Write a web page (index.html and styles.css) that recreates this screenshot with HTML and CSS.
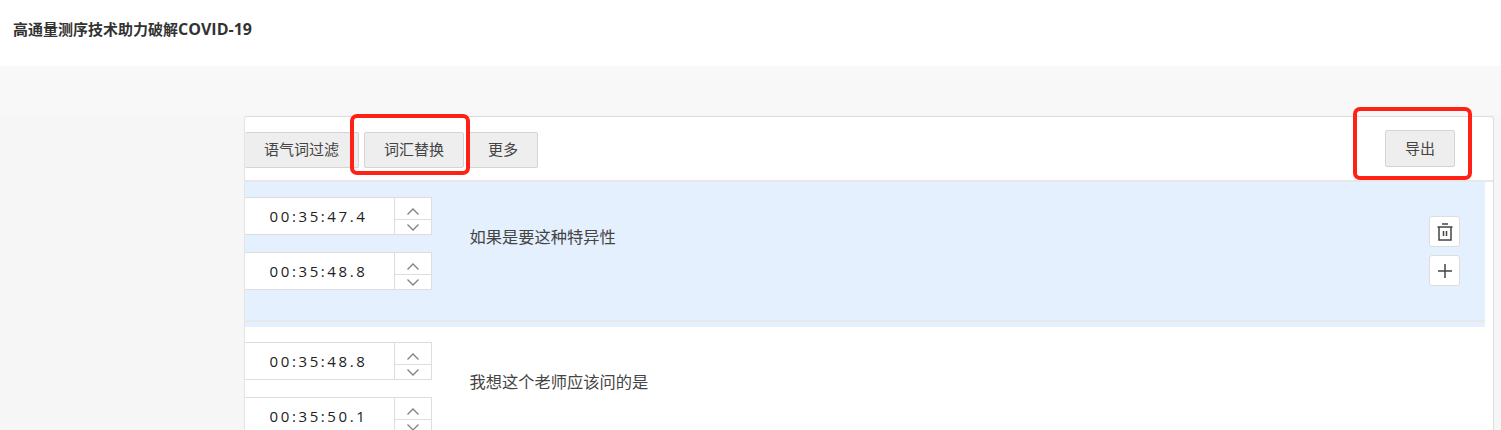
FILE: index.html
```html
<!DOCTYPE html>
<html lang="zh-CN">
  <head>
    <meta charset="UTF-8" />
    <title>高通量测序技术助力破解COVID-19</title>
    <link rel="stylesheet" href="styles.css">
  </head>
  <body>
    <header class="page-header">
      <h1>高通量测序技术助力破解<span class="title-latin">COVID-19</span></h1>
    </header>
    <main class="page-main">
      <section class="panel">
        <div class="toolbar">
          <div class="tool-group">
            <button class="tool-btn">语气词过滤</button>
            <button class="tool-btn">词汇替换</button>
            <button class="tool-btn">更多</button>
          </div>
          <button class="tool-btn export-btn">导出</button>
        </div>
        <div class="rows">
          <div class="row row-active">
            <div class="times">
              <div class="time-box">
                <span class="time-value">00:35:47.4</span>
                <span class="spinner">
                  <span class="spin spin-up"><svg width="12" height="7" viewBox="0 0 12 7"><path d="M.5 6.5L6 1l5.5 5.5" /></svg></span>
                  <span class="spin spin-down"><svg width="12" height="7" viewBox="0 0 12 7"><path d="M.5.5L6 6 11.5.5" /></svg></span>
                </span>
              </div>
              <div class="time-box">
                <span class="time-value">00:35:48.8</span>
                <span class="spinner">
                  <span class="spin spin-up"><svg width="12" height="7" viewBox="0 0 12 7"><path d="M.5 6.5L6 1l5.5 5.5" /></svg></span>
                  <span class="spin spin-down"><svg width="12" height="7" viewBox="0 0 12 7"><path d="M.5.5L6 6 11.5.5" /></svg></span>
                </span>
              </div>
            </div>
            <p class="row-text">如果是要这种特异性</p>
            <div class="row-actions">
              <button class="icon-btn">
                <svg width="16" height="18" viewBox="0 0 16 18"><path d="M.5 4h15M5 1h6M2 4v13h12V4M6.5 8v5M9.5 8v5" /></svg>
              </button>
              <button class="icon-btn">
                <svg width="16" height="16" viewBox="0 0 16 16"><path d="M8 1v14M1 8h14" /></svg>
              </button>
            </div>
          </div>
          <div class="row">
            <div class="times">
              <div class="time-box">
                <span class="time-value">00:35:48.8</span>
                <span class="spinner">
                  <span class="spin spin-up"><svg width="12" height="7" viewBox="0 0 12 7"><path d="M.5 6.5L6 1l5.5 5.5" /></svg></span>
                  <span class="spin spin-down"><svg width="12" height="7" viewBox="0 0 12 7"><path d="M.5.5L6 6 11.5.5" /></svg></span>
                </span>
              </div>
              <div class="time-box">
                <span class="time-value">00:35:50.1</span>
                <span class="spinner">
                  <span class="spin spin-up"><svg width="12" height="7" viewBox="0 0 12 7"><path d="M.5 6.5L6 1l5.5 5.5" /></svg></span>
                  <span class="spin spin-down"><svg width="12" height="7" viewBox="0 0 12 7"><path d="M.5.5L6 6 11.5.5" /></svg></span>
                </span>
              </div>
            </div>
            <p class="row-text">我想这个老师应该问的是</p>
          </div>
        </div>
      </section>
    </main>
    <!-- red marks drawn over the screenshot -->
    <div class="mark mark-replace"></div>
    <div class="mark mark-export"></div>
  </body>
</html>
```

FILE: styles.css
```css
* {
  box-sizing: border-box;
  margin: 0;
  padding: 0;
}

html,
body {
  height: 430px;
  overflow: hidden;
  background: #f6f6f6;
  color: #333;
  font-family: "Open Sans", "Noto Sans CJK SC", sans-serif;
}

body {
  position: relative;
}

/* Header */
.page-header {
  height: 66px;
  background: #fff;
  padding: 19px 13px 0;
}

.page-header h1 {
  font-size: 15px;
  line-height: 20px;
  font-weight: 700;
}

.title-latin {
  font-size: 16px;
}

/* Panel */
.page-main {
  padding: 50px 7px 0 244px;
  background: linear-gradient(#f8f8f8 49px, #f6f6f6 49px);
}

.panel {
  height: 314px;
  background: #fff;
  border: 1px solid #ddd;
  border-bottom: none;
  border-left-color: #e4e4e4;
  border-radius: 3px 3px 0 0;
}

.toolbar {
  display: flex;
  justify-content: space-between;
  height: 65px;
  padding: 13px 38px 0 0;
  border-bottom: 2px solid #e8e8e8;
}

.tool-group {
  display: flex;
  gap: 5px;
  padding-top: 2px;
}

.tool-btn {
  height: 36px;
  padding: 0 19px 3px;
  background: #eee;
  border: 1px solid #d4d4d4;
  border-radius: 2px;
  color: #444;
  font-family: inherit;
  font-size: 15px;
  white-space: nowrap;
}

.tool-group .tool-btn:first-child {
  border-left: none;
}

.tool-group .tool-btn:last-child {
  margin-left: -1px;
}

.export-btn {
  width: 70px;
  height: 37px;
  padding-bottom: 2px;
}

/* Rows */
.rows {
  padding-right: 8px;
}

.row {
  display: flex;
  align-items: flex-start;
  height: 145px;
  padding-top: 15px;
}

.row-active {
  position: relative;
  background: #e4f0fe;
}

.row-active::after {
  content: "";
  position: absolute;
  left: 0;
  right: 0;
  bottom: 5px;
  height: 2px;
  background: #e6e8ea;
}

.times {
  display: flex;
  flex-direction: column;
  gap: 17px;
  width: 187px;
}

.time-box {
  display: flex;
  height: 38px;
  background: #fff;
  border: 1px solid #ddd;
  border-left: none;
}

.time-value {
  flex: 1;
  padding-right: 2px;
  text-align: center;
  font-size: 15px;
  line-height: 37px;
  letter-spacing: 2.6px;
  color: #222;
}

.spinner {
  display: flex;
  flex-direction: column;
  width: 37px;
  border-left: 1px solid #ddd;
}

.spin {
  flex: 1;
  display: flex;
  align-items: center;
  justify-content: center;
}

.spin-up {
  padding-top: 7px;
}

.spin-down {
  padding-top: 1px;
  border-top: 1px solid #ddd;
}

.spin svg {
  fill: none;
  stroke: #808080;
  stroke-width: 1.3;
}

.row-text {
  margin: 30px 0 0 37.5px;
  font-size: 16.25px;
  line-height: 20px;
  color: #444;
}

.row-actions {
  display: flex;
  flex-direction: column;
  gap: 8px;
  margin: 19px 25px 0 auto;
}

.icon-btn {
  display: flex;
  align-items: center;
  justify-content: center;
  width: 31px;
  height: 31px;
  background: #fff;
  border: 1px solid #ddd;
  border-radius: 3px;
}

.icon-btn svg {
  fill: none;
  stroke: #444;
  stroke-width: 1.5;
}

/* Red marks */
.mark {
  position: absolute;
  border: 4px solid #ff2116;
  border-radius: 7px;
}

.mark-replace {
  left: 350px;
  top: 114px;
  width: 120px;
  height: 61px;
}

.mark-export {
  left: 1353px;
  top: 107px;
  width: 119px;
  height: 73px;
}
```
